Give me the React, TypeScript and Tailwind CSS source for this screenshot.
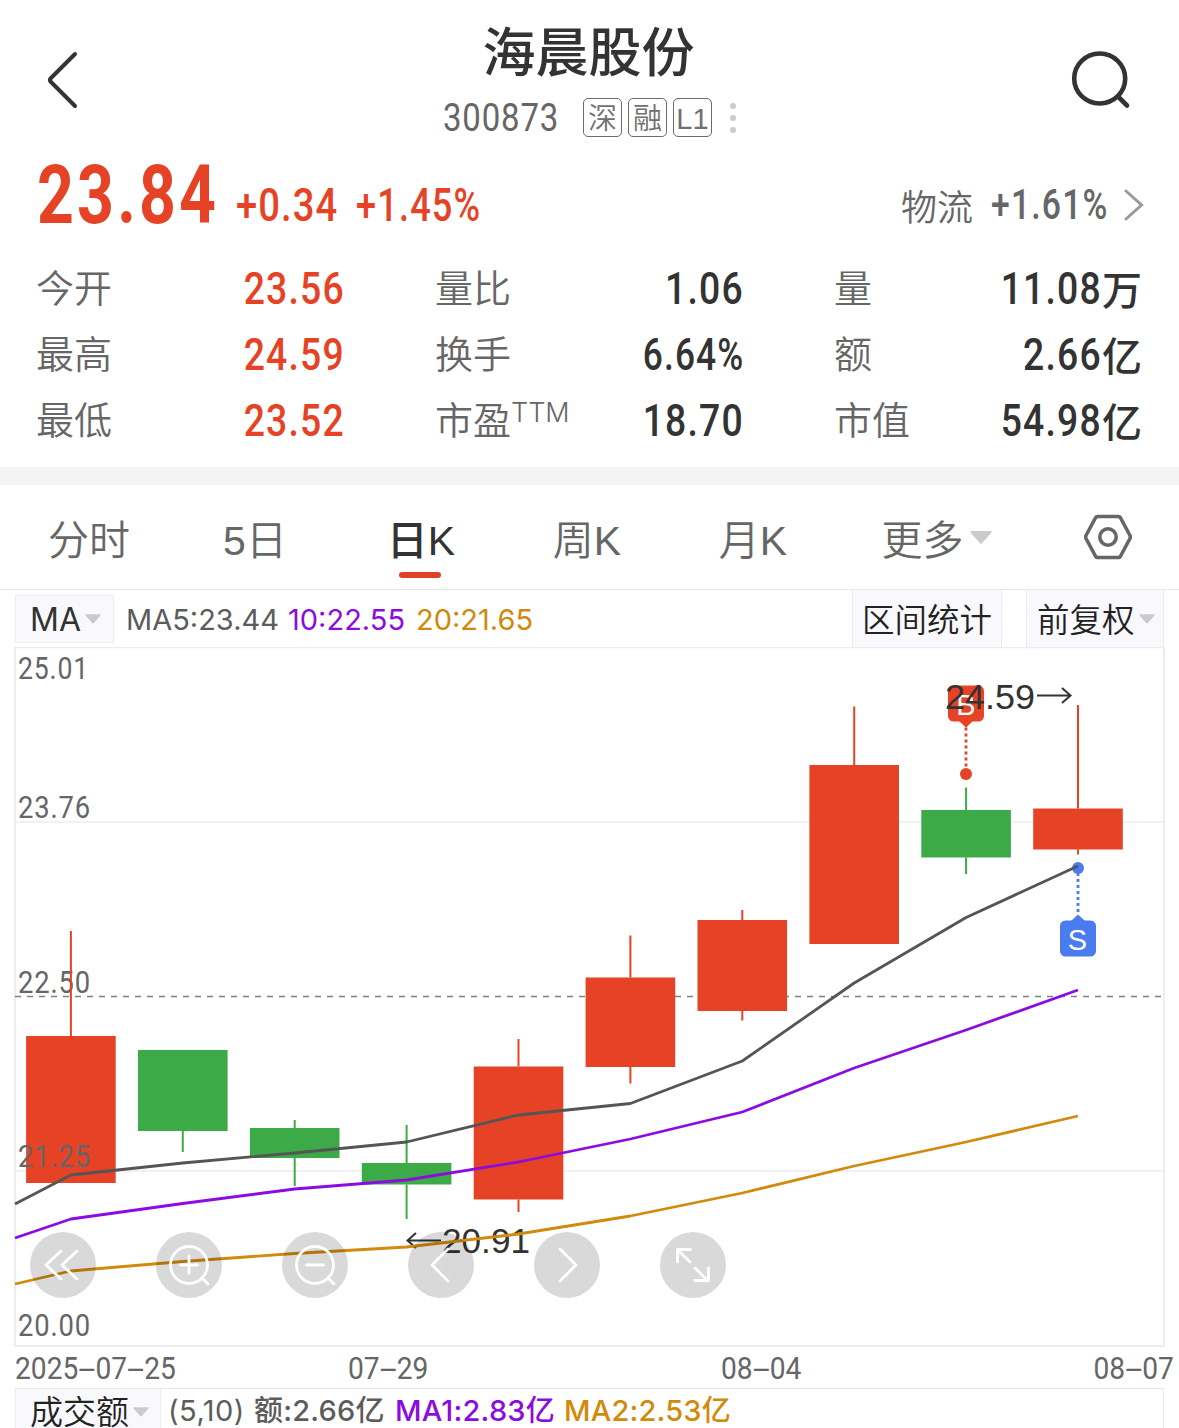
import type { ReactNode } from 'react';

type Candle = { high: number; top: number; bottom: number; low: number; up: boolean };

const RED = '#e64226';
const GREEN = '#3caa46';

// pixel rows inside the chart's viewBox
const candles: Candle[] = [
  { high: 931, top: 1036, bottom: 1183, low: 1183, up: true },
  { high: 1050, top: 1050, bottom: 1131, low: 1152, up: false },
  { high: 1120, top: 1128, bottom: 1158, low: 1186, up: false },
  { high: 1125, top: 1163, bottom: 1184.5, low: 1219, up: false },
  { high: 1039, top: 1066.5, bottom: 1199.5, low: 1212, up: true },
  { high: 935.5, top: 977.5, bottom: 1067, low: 1083.5, up: true },
  { high: 910, top: 920, bottom: 1011, low: 1020.5, up: true },
  { high: 706.5, top: 765, bottom: 944, low: 944, up: true },
  { high: 787.5, top: 810, bottom: 857.5, low: 874, up: false },
  { high: 705, top: 808.5, bottom: 849.5, low: 854.5, up: true },
];

const ma5 = [1175, 1163, 1153, 1142, 1115, 1103.5, 1061, 983, 917.5, 866];
const ma10 = [1219, 1203.5, 1189, 1180, 1162, 1139, 1112, 1068, 1030, 990];
const ma20 = [1271, 1261.5, 1253.5, 1247, 1234, 1216, 1193, 1166, 1142, 1116];

const cx = (i: number) => 70.9 + i * 111.9;
const line = (start: number, ys: number[]) => [`15,${start}`, ...ys.map((y, i) => `${cx(i)},${y}`)].join(' ');

const axis = [
  { y: 678.5, label: '25.01', w: 70 },
  { y: 817.5, label: '23.76', w: 72 },
  { y: 992.5, label: '22.50', w: 72 },
  { y: 1167, label: '21.25', w: 72 },
  { y: 1335.5, label: '20.00', w: 72 },
];

const dates = [
  { x: 15, label: '2025-07-25' },
  { x: 348, label: '07-29' },
  { x: 721, label: '08-04' },
  { x: 1093.5, label: '08-07' },
];

const stats = [
  { label: '今开', value: '23.56', red: true },
  { label: '量比', value: '1.06' },
  { label: '量', value: '11.08', unit: '万' },
  { label: '最高', value: '24.59', red: true },
  { label: '换手', value: '6.64%' },
  { label: '额', value: '2.66', unit: '亿' },
  { label: '最低', value: '23.52', red: true },
  { label: '市盈', sup: 'TTM', value: '18.70' },
  { label: '市值', value: '54.98', unit: '亿' },
];

const tabs = ['分时', '5日', '日K', '周K', '月K'];

function Caret({ className }: { className: string }) {
  return (
    <svg viewBox="0 0 22 13" className={className} fill="#cbcbcb">
      <path d="M1.500 0h19c1 0 1.500 1 .8 1.700L12.200 12a1.600 1.600 0 0 1-2.400 0L.7 1.700C0 1 .5 0 1.500 0z" />
    </svg>
  );
}

function Tag({ children }: { children: ReactNode }) {
  return (
    <span className="flex h-[39px] w-[39px] items-center justify-center rounded-[5px] border-[1.5px] border-[#6c6c6c] pt-[3px] text-[29px] leading-none font-[350] text-[#707070]">
      {children}
    </span>
  );
}

function Header() {
  return (
    <header className="flex h-[150px] justify-between">
      <svg viewBox="0 0 40 64" className="mt-[48px] ml-[42px] h-[64px] w-[40px]" fill="none" stroke="#333" strokeWidth="4" strokeLinecap="round" strokeLinejoin="round">
        <path d="M33 6L8.500 30.500a2 2 0 0 0 0 3L33 58" />
      </svg>
      <div className="flex flex-col items-center pt-[24px] pl-[29px]">
        <h1 className="mr-[2px] text-[53px] leading-[60px] font-medium text-[#333]">海晨股份</h1>
        <div className="mt-[13px] flex h-[41px] items-center">
          <span className="w-[116px] text-left font-[Roboto] text-[39px] leading-none text-[#666]">
            <span className="mt-[2px] inline-block origin-left scale-x-[0.845] tracking-[1px]">300873</span>
          </span>
          <div className="ml-[24px] flex gap-[6px]">
            <Tag>深</Tag>
            <Tag>融</Tag>
            <Tag>L1</Tag>
          </div>
          <div className="ml-[18px] flex flex-col gap-[6px]">
            <i className="size-[6px] rounded-full bg-[#ccc]" />
            <i className="size-[6px] rounded-full bg-[#ccc]" />
            <i className="size-[6px] rounded-full bg-[#ccc]" />
          </div>
        </div>
      </div>
      <svg viewBox="0 0 64 64" className="mt-[48px] mr-[47px] h-[64px] w-[64px]" fill="none" stroke="#333" strokeWidth="4.600" strokeLinecap="round">
        <ellipse cx="31.700" cy="30.500" rx="25.500" ry="25" />
        <path d="M50 48.500l9 9" />
      </svg>
    </header>
  );
}

function PriceRow() {
  return (
    <div className="flex h-[100px] items-start justify-between pr-[35px] pl-[37px] font-[Roboto] leading-none whitespace-nowrap">
      <div className="flex text-[46px] font-medium text-[#e64226]">
        <span className="w-[199px] text-[82px] font-bold">
          <span className="mt-[4px] inline-block origin-left scale-x-[0.785] tracking-[4px]">23.84</span>
        </span>
        <span className="mt-[32px] w-[120px]">
          <span className="inline-block origin-left scale-x-[0.83] tracking-[1.300px]">+0.34</span>
        </span>
        <span className="mt-[32px] w-[124px]">
          <span className="inline-block origin-left scale-x-[0.785] tracking-[1.500px]">+1.45%</span>
        </span>
      </div>
      <div className="mt-[33px] flex items-center text-[#666]">
        <span className="mr-[18px] font-['Noto_Sans_CJK_SC'] text-[36px] font-[350]">物流</span>
        <span className="w-[116px] text-[43px] font-medium">
          <span className="inline-block origin-left scale-x-[0.785] tracking-[1.500px]">+1.61%</span>
        </span>
        <svg viewBox="0 0 20 34" className="ml-[17px] h-[34px] w-[20px]" fill="none" stroke="#999" strokeWidth="3" strokeLinecap="round">
          <path d="M2 3l15.500 14L2 31" />
        </svg>
      </div>
    </div>
  );
}

function Stats() {
  return (
    <section className="flex h-[217px] items-start px-[37px] pt-[5px]">
      <div className="grid w-full grid-cols-3 gap-x-[92px]">
        {stats.map((s) => (
          <div key={s.label} className="flex h-[66px] items-center justify-between leading-none whitespace-nowrap">
            <span className="ml-[-1px] flex pt-[2px] text-[38px] font-[350] text-[#666]">
              {s.label}
              {s.sup && <span className="mt-[-3px] font-['Inter'] text-[27px] font-light">{s.sup}</span>}
            </span>
            <span className={`flex items-center font-[Roboto] text-[45px] font-medium ${s.red ? 'text-[#e64226]' : 'text-[#333]'}`}>
              <span className={`mr-[-1px] inline-block origin-right tracking-[1.400px] ${s.value.endsWith('%') ? 'scale-x-[0.785]' : 'scale-x-[0.83]'}`}>{s.value}</span>
              {s.unit && <span className="ml-px font-['Noto_Sans_CJK_SC'] text-[40px]">{s.unit}</span>}
            </span>
          </div>
        ))}
      </div>
    </section>
  );
}

function Tabs() {
  return (
    <nav className="flex h-[105px] border-b border-[#e8e8e8] pl-[6px] text-[41px] leading-none font-[350] text-[#666]">
      {tabs.map((t) => {
        const active = t === '日K';
        return (
          <div key={t} className={`relative flex w-[166px] justify-center pt-[36px] ${active ? 'font-medium text-[#333]' : ''}`}>
            {t}
            {active && <i className="absolute bottom-[11px] left-[61px] h-[6px] w-[42px] rounded-full bg-[#e04228]" />}
          </div>
        );
      })}
      <div className="flex w-[201px] justify-center pt-[36px]">
        更多
        <Caret className="mt-[10px] ml-[6px] h-[13px] w-[22px]" />
      </div>
      <div className="flex flex-1 justify-center pt-[28px]">
        <svg viewBox="0 0 48 48" className="h-[48px] w-[48px]" fill="none" stroke="#666" strokeWidth="3.600" strokeLinejoin="round">
          <path d="M13.500 3.500h21q1.200 0 1.800 1L46 22.500q.6 1.500 0 3L36.300 43.500q-.6 1-1.800 1h-21q-1.200 0-1.800-1L2 25.500q-.6-1.500 0-3L11.700 4.500q.6-1 1.800-1z" />
          <circle cx="24" cy="24" r="8.200" />
        </svg>
      </div>
    </nav>
  );
}

function ChartToolbar() {
  return (
    <div className="flex h-[57px] pr-[15px] pl-[15px] leading-none whitespace-nowrap">
      <div className="mt-[5px] flex h-[48px] w-[99px] items-center border border-[#ededf1] bg-[#f9f9fd] pl-[14px] font-['Inter'] text-[32px] text-[#333]">
        <span className="w-[54px] pt-[2px]">MA</span>
        <Caret className="ml-[1px] h-[10px] w-[16px]" />
      </div>
      <div className="ml-[12px] flex items-center pt-px font-['Inter'] text-[29px] text-[#5c5c5c]">
        <span className="w-[162px]">MA5:23.44</span>
        <span className="w-[128px] text-[#8c0be0]">10:22.55</span>
        <span className="text-[#cf890c]">20:21.65</span>
      </div>
      <div className="ml-auto flex w-[150px] items-center justify-center border-x border-[#ededf1] bg-[#f9f9fd] pt-[5px] text-[32.500px] font-[350] text-[#222]">区间统计</div>
      <div className="ml-[24px] flex w-[138px] items-center border-x border-[#ededf1] bg-[#f9f9fd] pl-[10px] text-[32.500px] font-[350] text-[#222]">
        <span className="pt-[5px]">前复权</span>
        <Caret className="ml-[4px] h-[10px] w-[16px]" />
      </div>
    </div>
  );
}

function DateLabel({ x, label }: { x: number; label: string }) {
  return (
    <text transform={`translate(${x} 1378.500) scale(0.88 1)`}>
      {label.split('-').map((part, i) => (
        <tspan key={i}>
          {i > 0 && <tspan textLength="19.500" lengthAdjust="spacingAndGlyphs">-</tspan>}
          {part}
        </tspan>
      ))}
    </text>
  );
}

function Chart() {
  return (
    <svg viewBox="0 647 1179 741" className="block h-[741px] w-[1179px]">
      <g stroke="#ededf0" strokeWidth="2" fill="none">
        <path d="M15 647.500H1164" strokeWidth="1.500" />
        <path d="M15 647V1346M1164 647V1346" />
        <path d="M14 1346H1165" />
        <path d="M15 822H1164M15 1171H1164" strokeWidth="1.500" />
      </g>
      <path d="M15 996.500H1164" stroke="#808080" strokeWidth="1.300" strokeDasharray="6 6" />

      {candles.map((c, i) => (
        <rect key={i} x={cx(i) - 44.8} y={c.top} width="89.600" height={c.bottom - c.top} fill={c.up ? RED : GREEN} />
      ))}

      <g fontFamily="Roboto, sans-serif" fontSize="32" fill="#666">
        {axis.map((a) => (
          <text key={a.label} x="18" y={a.y} letterSpacing="1" textLength={a.w + 1} lengthAdjust="spacingAndGlyphs">{a.label}</text>
        ))}
        {dates.map((d) => (
          <DateLabel key={d.label} {...d} />
        ))}
      </g>

      {candles.map((c, i) => (
        <path key={i} d={`M${cx(i)} ${c.high}V${c.top}M${cx(i)} ${c.bottom}V${c.low}`} stroke={c.up ? RED : GREEN} strokeWidth="2" />
      ))}

      {/* buy marker */}
      <g fill={RED}>
        <rect x="948" y="685.500" width="36" height="36" rx="5.500" />
        <path d="M959 721l7 6.500 7-6.500z" />
        <path d="M966 727.500V768" stroke={RED} strokeWidth="2.800" strokeDasharray="3 3" />
        <circle cx="966" cy="774" r="6" />
        <text x="966" y="714.500" fill="#fff" fontFamily="Liberation Sans, sans-serif" fontSize="29" textAnchor="middle">B</text>
      </g>

      {/* sell marker */}
      <g fill="#4a7cf0">
        <circle cx="1078" cy="868" r="6" />
        <path d="M1078 873V915" stroke="#4a7cf0" strokeWidth="2.800" strokeDasharray="3 3" />
        <path d="M1071 921l7-6.500 7 6.500z" />
        <rect x="1060" y="920.500" width="36" height="36" rx="5.500" />
        <text x="1077.500" y="949.500" fill="#fff" fontFamily="Liberation Sans, sans-serif" fontSize="29" textAnchor="middle">S</text>
      </g>

      <g fill="none" strokeWidth="2.800" strokeLinejoin="round">
        <polyline points={line(1204, ma5)} stroke="#555" />
        <polyline points={line(1238, ma10)} stroke="#8c0be0" />
      </g>

      <g fontFamily="Liberation Sans, sans-serif" fontSize="35" fill="#333">
        <text x="945" y="709" textLength="90" lengthAdjust="spacingAndGlyphs">24.59</text>
        <text x="442" y="1253" textLength="88" lengthAdjust="spacingAndGlyphs">20.91</text>
      </g>
      <g fill="none" stroke="#333" strokeWidth="2">
        <path d="M1037 695.500H1070M1062 688l8.500 7.500-8.500 7.500" />
        <path d="M441 1240.500H408M416 1233l-8.500 7.500 8.500 7.500" />
      </g>
      <polyline points={line(1284, ma20)} fill="none" stroke="#d18a0c" strokeWidth="2.800" strokeLinejoin="round" />
    </svg>
  );
}

const controls = [
  'M31 19L16 33l15 14M47 19L32 33l15 14',
  'M33 24.500v17M24.500 33h17M46 46l6 6',
  'M24.500 33h17M46 46l6 6',
  'M40 17L24 33l16 16',
  'M26 17l16 16-16 16',
  'M30 30L18 18M17.500 30V17.500h13M35 36l13 13M48.500 36v12.500H35',
];

function ChartControls() {
  return (
    <div className="absolute top-[585px] left-[30px] flex gap-[60px]">
      {controls.map((d, i) => (
        <button key={d} className="size-[66px] rounded-full bg-black/15">
          <svg viewBox="0 0 66 66" className="size-[66px]" fill="none" stroke="#fff" strokeWidth="2.800" strokeLinecap="round" strokeLinejoin="round">
            <path d={d} />
            {(i === 1 || i === 2) && <circle cx="33" cy="33" r="18.500" />}
          </svg>
        </button>
      ))}
    </div>
  );
}

function VolumeBar() {
  return (
    <div className="mx-[15px] flex h-[40px] overflow-hidden border-t border-r border-[#e9e9ec] text-[29px] leading-none whitespace-nowrap">
      <div className="flex h-[47px] w-[146px] items-center border-x border-[#ededf1] bg-[#f9f9fd] pl-[14px] text-[33px] font-[350] text-[#222]">
        成交额
        <Caret className="mb-[1px] ml-[4px] h-[10px] w-[16px]" />
      </div>
      <div className="ml-[7px] flex h-[42px] items-center font-['Inter','Noto_Sans_CJK_SC'] font-[450] text-[#5c5c5c]">
        <span className="w-[86px] font-normal tracking-[0.500px]">(5,10)</span>
        <span className="w-[141px] tracking-[0.200px]">额:2.66亿</span>
        <span className="w-[169px] tracking-[0.200px] text-[#8c0be0]">MA1:2.83亿</span>
        <span className="tracking-[0.200px] text-[#d18a0c]">MA2:2.53亿</span>
      </div>
    </div>
  );
}

export default function App() {
  return (
    <div className="h-[1428px] w-[1179px] overflow-hidden bg-white font-['Liberation_Sans','Noto_Sans_CJK_SC',sans-serif]">
      <Header />
      <PriceRow />
      <Stats />
      <div className="h-[18px] bg-[#f4f4f4]" />
      <Tabs />
      <ChartToolbar />
      <div className="relative">
        <Chart />
        <ChartControls />
      </div>
      <VolumeBar />
    </div>
  );
}
